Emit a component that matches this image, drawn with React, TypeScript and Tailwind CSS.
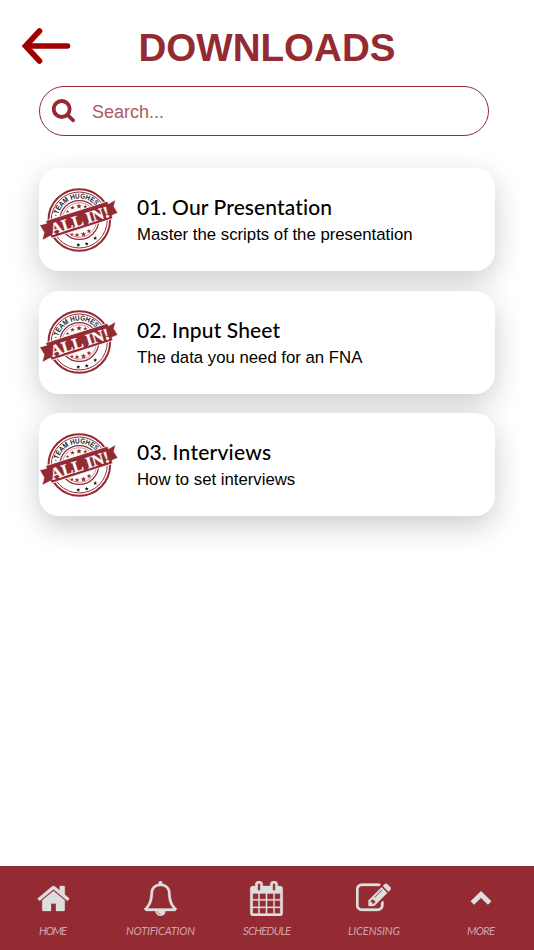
import type { ReactNode } from 'react'

const icons = {
  home: 'M1472 992v480q0 26-19 45t-45 19h-384v-384h-256v384h-384q-26 0-45-19t-19-45v-480q0-1 .5-3t.5-3l575-474 575 474q1 2 1 6zm223-69l-62 74q-8 9-21 11h-3q-13 0-21-7l-692-577-692 577q-12 8-24 7-13-2-21-11l-62-74q-8-10-7-23.5t11-21.5l719-599q32-26 76-26t76 26l244 204v-195q0-14 9-23t23-9h192q14 0 23 9t9 23v408l219 182q10 8 11 21.5t-7 23.5z',
  bell: 'M912 1696q0-16-16-16-59 0-101.5-42.5t-42.5-101.5q0-16-16-16t-16 16q0 73 51.5 124.5t124.5 51.5q16 0 16-16zm-666-288h1300q-266-300-266-832 0-51-24-105t-69-103-121.5-80.5-169.5-31.5-169.5 31.5-121.5 80.5-69 103-24 105q0 532-266 832zm1482 0q0 52-38 90t-90 38h-448q0 106-75 181t-181 75-181-75-75-181h-448q-52 0-90-38t-38-90q50-42 91-88t85-119.5 74.5-158.5 50-206 19.5-260q0-152 117-282.5t307-158.5q-8-19-8-39 0-40 28-68t68-28 68 28 28 68q0 20-8 39 190 28 307 158.5t117 282.5q0 139 19.5 260t50 206 74.5 158.5 85 119.5 91 88z',
  calendar:
    'M192 1664h288v-288h-288v288zm352 0h320v-288h-320v288zm-352-352h288v-320h-288v320zm352 0h320v-320h-320v320zm-352-384h288v-288h-288v288zm736 736h320v-288h-320v288zm-384-736h320v-288h-320v288zm768 736h288v-288h-288v288zm-384-352h320v-320h-320v320zm-352-864v-288q0-13-9.5-22.5t-22.5-9.5h-64q-13 0-22.5 9.5t-9.5 22.5v288q0 13 9.5 22.5t22.5 9.5h64q13 0 22.5-9.5t9.5-22.5zm736 864h288v-320h-288v320zm-384-384h320v-288h-320v288zm384 0h288v-288h-288v288zm32-480v-288q0-13-9.5-22.5t-22.5-9.5h-64q-13 0-22.5 9.5t-9.5 22.5v288q0 13 9.5 22.5t22.5 9.5h64q13 0 22.5-9.5t9.5-22.5zm384-64v1280q0 52-38 90t-90 38h-1408q-52 0-90-38t-38-90v-1280q0-52 38-90t90-38h128v-96q0-66 47-113t113-47h64q66 0 113 47t47 113v96h384v-96q0-66 47-113t113-47h64q66 0 113 47t47 113v96h128q52 0 90 38t38 90z',
  edit: 'M888 1184l116-116-152-152-116 116v56h96v96h56zm440-720q-16-16-33 1l-350 350q-17 17-1 33t33-1l350-350q17-17 1-33zm80 594v190q0 119-84.5 203.5t-203.5 84.5h-832q-119 0-203.5-84.5t-84.5-203.5v-832q0-119 84.5-203.5t203.5-84.5h832q63 0 117 25 15 7 18 23 3 17-9 29l-49 49q-14 14-32 8-23-6-45-6h-832q-66 0-113 47t-47 113v832q0 66 47 113t113 47h832q66 0 113-47t47-113v-126q0-13 9-22l64-64q15-15 35-7t20 29zm-96-738l288 288-672 672h-288v-288zm444 132l-92 92-288-288 92-92q28-28 68-28t68 28l152 152q28 28 28 68t-28 68z',
}

const downloads = [
  {
    title: '01. Our Presentation',
    text: 'Master the scripts of the presentation',
    width: 195,
  },
  {
    title: '02. Input Sheet',
    text: 'The data you need for an FNA',
    width: 143,
  },
  {
    title: '03. Interviews',
    text: 'How to set interviews',
    width: 134,
  },
]

function Icon({ path, className }: { path: string; className: string }) {
  return (
    <svg
      viewBox="0 0 1792 1792"
      fill="currentColor"
      stroke="currentColor"
      strokeWidth="16"
      className={className}
    >
      <path d={path} />
    </svg>
  )
}

function Star({ x, y, r, fill }: { x: number; y: number; r: number; fill: string }) {
  return (
    <path
      transform={`translate(${x} ${y}) scale(${r})`}
      fill={fill}
      d="M0-1 .26-.34.95-.31.42.14.59.81 0 .44-.59.81-.42.14-.95-.31-.26-.34Z"
    />
  )
}

function Stamp() {
  return (
    <svg viewBox="0 0 80 70" className="h-[70px] w-20 shrink-0">
      <defs>
        <path id="stamp-arc" d="M18.7 35a21.6 21.6 0 0 1 43.2 0" />
      </defs>
      <g fill="none" stroke="#942b33">
        <circle cx="40.3" cy="35" r="30.8" strokeWidth="2" />
        <circle cx="40.3" cy="35" r="28" strokeWidth="1" />
        <circle cx="40.3" cy="35" r="19.4" strokeWidth="1.2" />
        <circle cx="40.3" cy="35" r="17.2" strokeWidth=".5" />
      </g>
      <text
        transform="rotate(-13 40.3 35)"
        fontSize="7.4"
        fontWeight="700"
        fill="#222"
        className="font-['Liberation_Sans_Narrow','Liberation_Sans',sans-serif]"
      >
        <textPath
          href="#stamp-arc"
          startOffset="50%"
          textAnchor="middle"
          textLength="51"
          lengthAdjust="spacingAndGlyphs"
        >
          ·TEAM HUGHES·
        </textPath>
      </text>
      <Star x={28.5} y={26.5} r={1.8} fill="#942b33" />
      <Star x={33.5} y={22.8} r={2.4} fill="#942b33" />
      <Star x={40} y={21.3} r={2.9} fill="#942b33" />
      <Star x={46.3} y={22} r={2.4} fill="#942b33" />
      <Star x={33} y={49.5} r={1.9} fill="#942b33" />
      <Star x={38} y={50} r={2.5} fill="#942b33" />
      <Star x={44.5} y={49.3} r={2.9} fill="#942b33" />
      <Star x={50} y={46.2} r={2.5} fill="#942b33" />
      <Star x={39.3} y={60} r={2.1} fill="#111" />
      <Star x={47.7} y={58.8} r={2.1} fill="#111" />
      <Star x={56.2} y={53.2} r={2.1} fill="#111" />
      <path
        fill="#942b33"
        stroke="#fff"
        strokeWidth=".8"
        d="M.5 40 7.5 38.3 6.5 35.8 68.5 16.2 69.5 18.7 76.8 14.5 75 21.5 79 28 73 30.5 74 33.5 12.5 53.2 11.5 51 3 55.5 5 47.5Z"
      />
      <text
        x="40.5"
        y="40.9"
        textAnchor="middle"
        textLength="61"
        lengthAdjust="spacingAndGlyphs"
        transform="rotate(-17.5 41 35)"
        fill="#fff"
        stroke="#fff"
        strokeWidth=".2"
        fontSize="16.5"
        fontWeight="700"
        className="font-['Liberation_Serif',serif]"
      >
        ALL IN!
      </text>
    </svg>
  )
}

function DownloadCard({ title, text, width }: { title: string; text: string; width: number }) {
  return (
    <article className="flex h-[103px] items-center rounded-[20px] bg-white shadow-[0_10px_30px_rgba(0,0,0,0.2)]">
      <Stamp />
      <div className="ml-[18px] pt-[2px]">
        <h2>
          <svg height="28" width={width} className="block overflow-visible">
            <text
              x="0"
              y="21"
              textLength={width}
              className="font-['Lato',sans-serif] text-[21px] font-medium [font-variant-ligatures:none]"
            >
              {title}
            </text>
          </svg>
        </h2>
        <p className="text-[16.75px] leading-[25px]">{text}</p>
      </div>
    </article>
  )
}

function Tab({ label, width, children }: { label: string; width: number; children: ReactNode }) {
  return (
    <button type="button" className="flex flex-1 flex-col items-center pt-[14px]">
      <span className="flex h-9 items-center justify-center text-[#dedede]">{children}</span>
      <svg height="16" width={width} className="mt-[7px] block overflow-visible">
        <text
          x="0"
          y="11.5"
          textLength={width}
          fill="#d3a3a7"
          className="font-['Lato',sans-serif] text-[11px] italic"
        >
          {label}
        </text>
      </svg>
    </button>
  )
}

export default function App() {
  return (
    <div className="flex h-[950px] w-[534px] flex-col bg-white font-['Liberation_Sans',Arial,sans-serif] text-black">
      <header className="grid h-[86px] grid-cols-[72px_1fr_72px] items-center pt-2">
        <svg viewBox="0 0 72 48" className="h-12 w-[72px]" fill="none" stroke="#a00000">
          <path
            d="M39.5 8 25.5 23l14 15M26 23h41.5"
            strokeWidth="5.6"
            strokeLinecap="round"
            strokeLinejoin="miter"
          />
          <path d="m31 19-4 4 4 4z" fill="#a00000" />
        </svg>
        <h1 className="pt-[2px] text-center text-[38.6px] leading-none font-bold text-[#942b33]">
          DOWNLOADS
        </h1>
      </header>

      <main className="flex-1 px-[39px]">
        <label className="flex h-[50px] w-[450px] items-center rounded-full border-[1.5px] border-[#942b33] pl-3 text-[#942b33]">
          <svg viewBox="0 0 24 24" className="size-6" fill="none" stroke="currentColor">
            <circle cx="9.7" cy="10" r="8" strokeWidth="3.8" />
            <path d="m16 16.3 5.2 5" strokeWidth="3.7" strokeLinecap="round" />
          </svg>
          <input
            type="text"
            placeholder="Search..."
            className="ml-4 w-80 pt-[2px] text-[18px] outline-none placeholder:text-[#ad5a60]"
          />
        </label>

        <div className="mt-8 flex flex-col gap-[19.5px]">
          {downloads.map((item) => (
            <DownloadCard key={item.title} {...item} />
          ))}
        </div>
      </main>

      <nav className="flex h-[84px] bg-[#942b33]">
        <Tab label="HOME" width={28}>
          <Icon path={icons.home} className="size-[35px]" />
        </Tab>
        <Tab label="NOTIFICATION" width={69}>
          <Icon path={icons.bell} className="size-[35px]" />
        </Tab>
        <Tab label="SCHEDULE" width={48}>
          <Icon path={icons.calendar} className="size-[35px]" />
        </Tab>
        <Tab label="LICENSING" width={52}>
          <Icon path={icons.edit} className="size-[35px]" />
        </Tab>
        <Tab label="MORE" width={28}>
          <svg viewBox="0 0 36 36" className="size-9" fill="none" stroke="currentColor">
            <path d="m9.3 23 8.7-8.6 8.7 8.6" strokeWidth="5" />
          </svg>
        </Tab>
      </nav>
    </div>
  )
}
